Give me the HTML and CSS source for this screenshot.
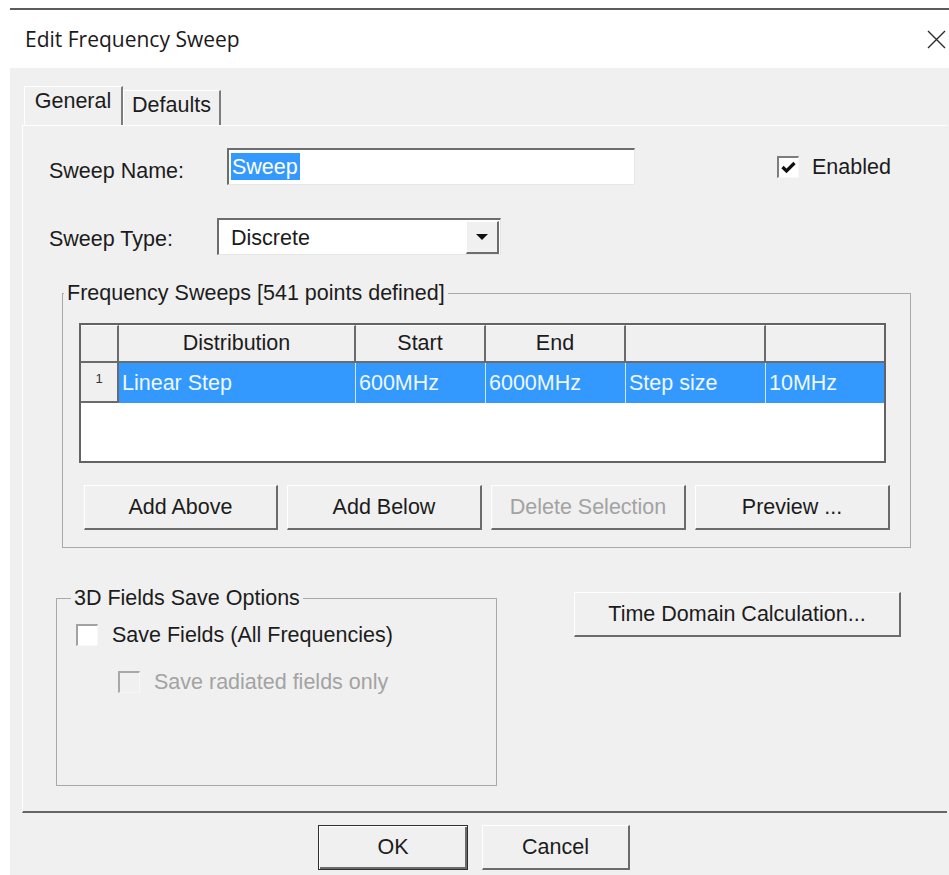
FILE: index.html
```html
<!DOCTYPE html>
<html lang="en">
<head>
<meta charset="utf-8">
<title>Edit Frequency Sweep</title>
<link rel="stylesheet" href="styles.css">
</head>
<body>
<div class="dialog">
  <div class="titlebar">
    <span class="title">Edit Frequency Sweep</span>
    <svg class="close" viewBox="0 0 19 19" aria-hidden="true">
      <path d="M1 1 L18 18 M18 1 L1 18" stroke="#2b2b2b" stroke-width="1.4" fill="none"/>
    </svg>
  </div>

  <div class="client">
    <div class="tabs">
      <div class="tab active">General</div>
      <div class="tab">Defaults</div>
    </div>

    <div class="panel">
      <div class="row row-name">
        <span class="lbl lbl-name">Sweep Name:</span>
        <div class="edit name-edit"><span class="sel">Sweep</span></div>
        <div class="checkline enabled">
          <span class="cb">
            <svg viewBox="0 0 17 17" aria-hidden="true"><path d="M2.5 8 L6.5 12 L14.5 4" stroke="#111" stroke-width="3.2" fill="none"/></svg>
          </span>
          <span>Enabled</span>
        </div>
      </div>

      <div class="row row-type">
        <span class="lbl lbl-type">Sweep Type:</span>
        <div class="combo">
          <span class="combo-text">Discrete</span>
          <span class="drop">
            <svg viewBox="0 0 12 6" aria-hidden="true"><polygon points="0,0 12,0 6,6" fill="#111"/></svg>
          </span>
        </div>
      </div>

      <fieldset class="group sweeps">
        <legend>Frequency Sweeps [541 points defined]</legend>
        <div class="grid">
          <div class="hc"></div>
          <div class="hc">Distribution</div>
          <div class="hc">Start</div>
          <div class="hc">End</div>
          <div class="hc"></div>
          <div class="hc last"></div>
          <div class="rh">1</div>
          <div class="dc">Linear Step</div>
          <div class="dc">600MHz</div>
          <div class="dc">6000MHz</div>
          <div class="dc">Step size</div>
          <div class="dc last">10MHz</div>
        </div>
        <div class="btnrow">
          <button class="btn">Add Above</button>
          <button class="btn">Add Below</button>
          <button class="btn disabled">Delete Selection</button>
          <button class="btn">Preview ...</button>
        </div>
      </fieldset>

      <div class="lower">
        <fieldset class="group fields">
          <legend>3D Fields Save Options</legend>
          <div class="checkline opt">
            <span class="cb light"></span>
            <span>Save Fields (All Frequencies)</span>
          </div>
          <div class="checkline opt sub off">
            <span class="cb"></span>
            <span>Save radiated fields only</span>
          </div>
        </fieldset>
        <button class="btn tdc">Time Domain Calculation...</button>
      </div>
    </div>

    <div class="footer">
      <button class="btn ok">OK</button>
      <button class="btn cancel">Cancel</button>
    </div>
  </div>
</div>
</body>
</html>
```

FILE: styles.css
```css
* {
  box-sizing: border-box;
}

html,
body {
  margin: 0;
  padding: 0;
  background: #fff;
}

body {
  width: 949px;
  height: 875px;
  overflow: hidden;
  font-family: "Liberation Sans", Arial, sans-serif;
  font-size: 21.5px;
  color: #1c1c1c;
}

/* window frame */
.dialog {
  margin: 8px 0 0 10px;
  width: 939px;
  height: 867px;
  border-top: 2px solid #5b5b5b;
  background: #f0f0f0;
  display: flex;
  flex-direction: column;
}

.titlebar {
  flex: none;
  height: 58px;
  background: #fff;
  display: flex;
  align-items: center;
  justify-content: space-between;
  padding: 0 3px 0 15px;
}

.title {
  font-family: "Open Sans", "Liberation Sans", sans-serif;
  font-size: 21px;
  color: #1a1a1a;
}

.close {
  width: 19px;
  height: 19px;
}

.client {
  flex: 1;
  padding: 18px 0 0 12px;
}

/* tab strip */
.tabs {
  display: flex;
  align-items: flex-end;
  height: 39px;
  padding-left: 2px;
}

.tab {
  width: 98px;
  height: 35px;
  padding-top: 2px;
  line-height: 24px;
  text-align: center;
  border-top: 1px solid #fff;
  border-left: 1px solid #fff;
  border-right: 2px solid #7c7c7c;
}

.tab.active {
  width: 99px;
  height: 39px;
}

/* tab page */
.panel {
  height: 688px;
  margin-right: 2px;
  padding-left: 26px;
  border-top: 1px solid #fff;
  border-left: 1px solid #fff;
  border-bottom: 2px solid #676767;
}

.row {
  display: flex;
  align-items: center;
}

.row-name {
  margin-top: 22px;
  height: 37px;
}

.row-type {
  margin-top: 33px;
  height: 37px;
}

.lbl {
  flex: none;
  line-height: 24px;
}

.lbl-name {
  width: 178px;
  padding-top: 8px;
}

.lbl-type {
  width: 168px;
  padding-top: 4px;
}

/* sunken edit controls */
.edit,
.combo {
  height: 37px;
  background: #fff;
  border-top: 2px solid #6d6d6d;
  border-left: 2px solid #6d6d6d;
  border-right: 1px solid #e6e6e6;
  border-bottom: 1px solid #e6e6e6;
}

.name-edit {
  width: 408px;
  padding: 3px 0 0 2px;
}

.sel {
  display: inline-block;
  height: 27px;
  line-height: 28px;
  padding: 0 2px 0 1px;
  background: #3399ff;
  color: #fff;
}

.combo {
  width: 284px;
  display: flex;
  align-items: center;
  justify-content: space-between;
}

.combo-text {
  padding: 3px 0 0 12px;
}

.drop {
  width: 33px;
  height: 33px;
  margin-right: 1px;
  display: flex;
  align-items: center;
  justify-content: center;
  background: #f0f0f0;
  border-top: 1px solid #fff;
  border-left: 1px solid #fff;
  border-right: 2px solid #6d6d6d;
  border-bottom: 2px solid #6d6d6d;
}

.drop svg {
  width: 12px;
  height: 6px;
}

/* check boxes */
.checkline {
  display: flex;
  align-items: center;
  line-height: 24px;
}

.cb {
  flex: none;
  width: 22px;
  height: 22px;
  display: flex;
  align-items: center;
  justify-content: center;
  background: #fff;
  border-top: 2px solid #7d7d7d;
  border-left: 2px solid #7d7d7d;
  border-right: 1px solid #f7f7f7;
  border-bottom: 1px solid #f7f7f7;
}

.cb svg {
  width: 17px;
  height: 17px;
}

.cb.light {
  border-top-color: #a2a2a2;
  border-left-color: #a2a2a2;
}

.enabled {
  margin-left: 142px;
  gap: 13px;
}

/* group boxes */
.group {
  margin: 0;
  padding: 0;
  border: 1px solid #a9a9a9;
  min-width: 0;
}

.group legend {
  padding: 0 3px;
  line-height: 24px;
}

.sweeps {
  width: 849px;
  margin: 26px 0 0 13px;
  padding: 18px 0 17px 16px;
}

.sweeps legend {
  margin-left: -15px;
}

/* sweep table */
.grid {
  width: 807px;
  height: 140px;
  display: grid;
  grid-template-columns: 38px 237px 130px 140px 140px 118px;
  grid-template-rows: 38px 40px;
  align-content: start;
  background: #fff;
  border: 2px solid #636363;
}

.hc {
  background: #f0f0f0;
  border-top: 1px solid #fff;
  border-right: 2px solid #6b6b6b;
  border-bottom: 2px solid #6b6b6b;
  text-align: center;
  line-height: 35px;
}

.hc.last,
.dc.last {
  border-right: none;
}

.rh {
  background: #f0f0f0;
  border-right: 2px solid #6b6b6b;
  border-bottom: 2px solid #6b6b6b;
  font-size: 13px;
  line-height: 32px;
  text-align: center;
  color: #333;
}

.dc {
  background: #3399ff;
  color: #eef8ff;
  border-right: 1px solid #cfe6ff;
  padding-left: 3px;
  line-height: 40px;
  white-space: nowrap;
}

/* push buttons */
.btn {
  font: inherit;
  color: #1c1c1c;
  margin: 0;
  padding: 0;
  height: 45px;
  background: #f0f0f0;
  border-top: 1px solid #fff;
  border-left: 1px solid #fff;
  border-right: 2px solid #6b6b6b;
  border-bottom: 2px solid #6b6b6b;
}

.btn.disabled {
  color: #a3a3a3;
}

.btnrow {
  display: flex;
  gap: 9px;
  margin: 22px 0 0 5px;
}

.btnrow .btn {
  width: 195px;
}

.btnrow .btn:first-child {
  width: 194px;
}

/* lower section */
.lower {
  display: flex;
  align-items: flex-start;
  margin-top: 38px;
}

.fields {
  width: 441px;
  height: 200px;
  margin-left: 7px;
  padding: 13px 0 0 19px;
}

.fields legend {
  margin-left: -5px;
}

.opt {
  height: 24px;
  gap: 14px;
}

.sub {
  margin: 23px 0 0 42px;
}

.off .cb {
  background: #f0f0f0;
  border-color: #a8a8a8 #f7f7f7 #f7f7f7 #a8a8a8;
}

.off {
  color: #a3a3a3;
}

.tdc {
  width: 327px;
  margin: 6px 0 0 77px;
}

/* dialog buttons */
.footer {
  display: flex;
  gap: 14px;
  padding: 12px 0 0 296px;
}

.ok {
  width: 150px;
  border: 1px solid #2e2e2e;
  box-shadow: inset 1px 1px 0 #fff, inset -2px -2px 0 #6b6b6b;
}

.cancel {
  width: 148px;
}
```
